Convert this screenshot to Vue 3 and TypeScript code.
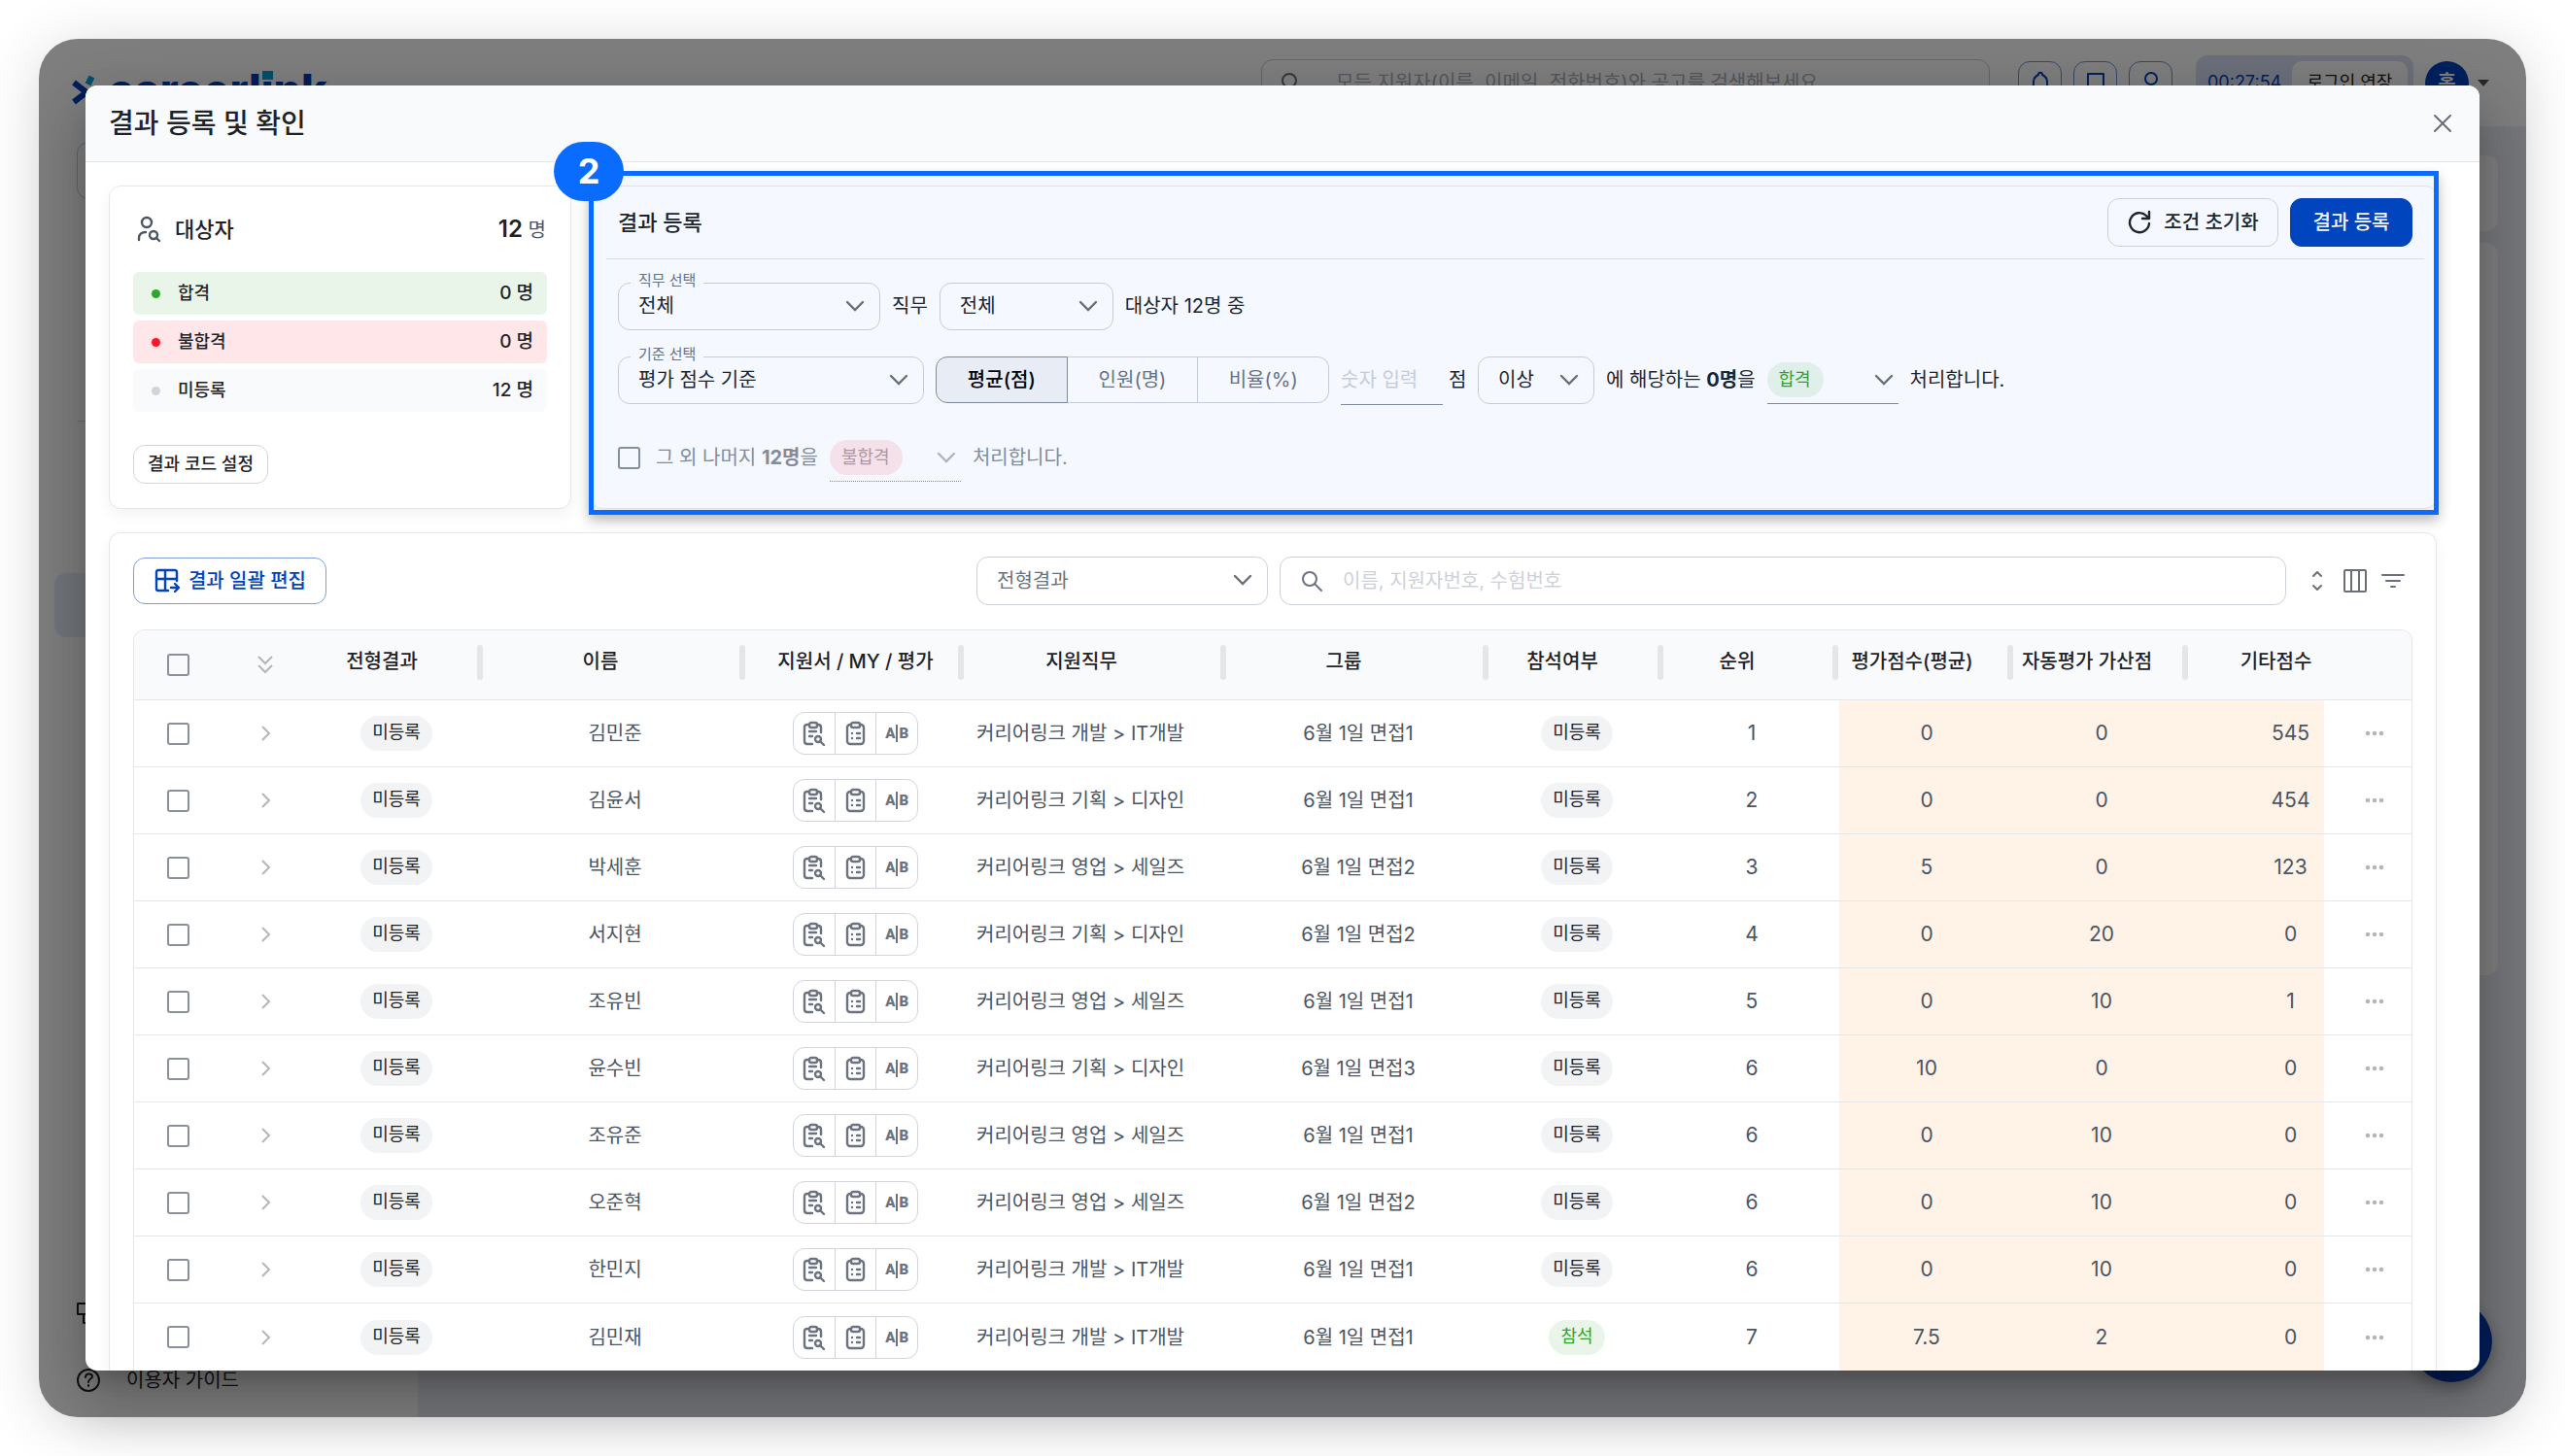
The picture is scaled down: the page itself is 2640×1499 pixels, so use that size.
<script setup lang="ts">
import { ref } from 'vue'

interface Applicant {
  name: string
  job: string
  group: string
  attended: boolean
  rank: number
  score: string
  bonus: number
  etc: number
}

interface Column {
  label: string
  kind: string
  bar: boolean
}

const applicants: Applicant[] = [
  { name: '김민준', job: '커리어링크 개발 > IT개발', group: '6월 1일 면접1', attended: false, rank: 1, score: '0', bonus: 0, etc: 545 },
  { name: '김윤서', job: '커리어링크 기획 > 디자인', group: '6월 1일 면접1', attended: false, rank: 2, score: '0', bonus: 0, etc: 454 },
  { name: '박세훈', job: '커리어링크 영업 > 세일즈', group: '6월 1일 면접2', attended: false, rank: 3, score: '5', bonus: 0, etc: 123 },
  { name: '서지현', job: '커리어링크 기획 > 디자인', group: '6월 1일 면접2', attended: false, rank: 4, score: '0', bonus: 20, etc: 0 },
  { name: '조유빈', job: '커리어링크 영업 > 세일즈', group: '6월 1일 면접1', attended: false, rank: 5, score: '0', bonus: 10, etc: 1 },
  { name: '윤수빈', job: '커리어링크 기획 > 디자인', group: '6월 1일 면접3', attended: false, rank: 6, score: '10', bonus: 0, etc: 0 },
  { name: '조유준', job: '커리어링크 영업 > 세일즈', group: '6월 1일 면접1', attended: false, rank: 6, score: '0', bonus: 10, etc: 0 },
  { name: '오준혁', job: '커리어링크 영업 > 세일즈', group: '6월 1일 면접2', attended: false, rank: 6, score: '0', bonus: 10, etc: 0 },
  { name: '한민지', job: '커리어링크 개발 > IT개발', group: '6월 1일 면접1', attended: false, rank: 6, score: '0', bonus: 10, etc: 0 },
  { name: '김민재', job: '커리어링크 개발 > IT개발', group: '6월 1일 면접1', attended: true, rank: 7, score: '7.5', bonus: 2, etc: 0 },
]

const columns: Column[] = [
  { label: '전형결과', kind: 'shifted', bar: true },
  { label: '이름', kind: 'shifted', bar: true },
  { label: '지원서 / MY / 평가', kind: '', bar: true },
  { label: '지원직무', kind: 'shifted', bar: true },
  { label: '그룹', kind: 'shifted', bar: true },
  { label: '참석여부', kind: 'shifted', bar: true },
  { label: '순위', kind: 'shifted', bar: true },
  { label: '평가점수(평균)', kind: 'shifted', bar: true },
  { label: '자동평가 가산점', kind: 'shifted', bar: true },
  { label: '기타점수', kind: 'wide', bar: false },
]

const summary = [
  { label: '합격', count: 0, tone: 'pass' },
  { label: '불합격', count: 0, tone: 'fail' },
  { label: '미등록', count: 12, tone: 'none' },
]

const units = ['평균(점)', '인원(명)', '비율(%)']
const unit = ref(units[0])
const restChecked = ref(false)
</script>

<template>
  <div class="page">
    <div class="frame">
      <div class="app">
        <header class="topbar">
          <div class="brand">
            <svg width="30" height="40" viewBox="0 0 30 40" aria-hidden="true">
              <path d="M3 12l13 10L3 32" fill="none" stroke="#003fbb" stroke-width="6" />
              <path d="M19 6l4 2-3 6-4-2z" fill="#00a3dc" stroke="#00a3dc" stroke-width="2" />
            </svg>
            <span class="wordmark">careerl<span class="dotted">i</span>nk</span>
          </div>
          <div class="topbar-right">
            <label class="global-search">
              <svg width="24" height="24" viewBox="0 0 24 24" class="line"><circle cx="10" cy="10" r="7" /><path d="M15 15l6 6" /></svg>
              <input type="text" aria-label="통합 검색" placeholder="모든 지원자(이름, 이메일, 전화번호)와 공고를 검색해보세요" />
            </label>
            <div class="top-icons">
              <button type="button" aria-label="알림"><svg width="24" height="24" viewBox="0 0 24 24" class="line"><path d="M4 18c1-1 1-4 1-7 0-4 3-6 5-7 0-3 4-3 4 0 2 1 5 3 5 7 0 3 0 6 1 7z" /></svg></button>
              <button type="button" aria-label="북마크"><svg width="24" height="24" viewBox="0 0 24 24" class="line"><path d="M4 22V3h16v19l-8-5z" /></svg></button>
              <button type="button" aria-label="사용자"><svg width="24" height="24" viewBox="0 0 24 24" class="line"><circle cx="12" cy="8" r="6" /><path d="M3 22c0-5 3-6 6-6M17 17l3 3" /></svg></button>
            </div>
            <div class="timer"><span>00:27:54</span><button type="button">로그인 연장</button></div>
            <div class="account"><span class="avatar">홍</span><span class="caret"></span></div>
          </div>
        </header>
        <div class="app-main">
          <nav class="sidebar">
            <div class="side-box"></div>
            <div class="side-line"></div>
            <div class="side-active"></div>
            <div class="side-foot">
              <svg width="28" height="28" viewBox="0 0 28 28" class="line"><path d="M2 3h19v11H2zM8 14v9h16v-9" /></svg>
              <a href="#guide">
                <svg width="28" height="28" viewBox="0 0 28 28" class="line"><circle cx="13" cy="14" r="11" /><path d="M10 11c0-5 7-4 7-1 0 3-4 2-4 6M13 19v1" /></svg>
                이용자 가이드
              </a>
            </div>
          </nav>
          <div class="content"><div class="ghost small"></div><div class="ghost large"></div></div>
        </div>
        <div class="fab"></div>
      </div>
      <div class="scrim"></div>

      <section class="modal" role="dialog" aria-label="결과 등록 및 확인">
        <header class="modal-head">
          <h1>결과 등록 및 확인</h1>
          <button type="button" class="icon-btn" aria-label="닫기">
            <svg width="22" height="22" viewBox="0 0 22 22" class="line"><path d="M3 3l16 16M19 3L3 19" /></svg>
          </button>
        </header>

        <div class="modal-body">
          <div class="top-row">
            <section class="card targets">
              <div class="targets-head">
                <svg width="28" height="28" viewBox="0 0 28 28" class="line bold">
                  <circle cx="11" cy="7" r="5" />
                  <path d="M3 25v-2c0-4 3-6 7-6" />
                  <circle cx="18" cy="20" r="4" /><path d="M21 23l3 3" />
                </svg>
                <h2>대상자</h2>
                <p class="total"><b>12</b> 명</p>
              </div>
              <ul>
                <li v-for="s in summary" :key="s.label" :class="s.tone">
                  <i class="dot"></i><span>{{ s.label }}</span><span class="count">{{ s.count }} 명</span>
                </li>
              </ul>
              <button type="button" class="btn small">결과 코드 설정</button>
            </section>

            <section class="register-wrap">
              <div class="card register">
                <div class="register-head">
                  <h2>결과 등록</h2>
                  <button type="button" class="btn reset">
                    <svg width="26" height="26" viewBox="0 0 26 26" class="line bold"><path d="M23 14a10 10 0 1 1-3-8l2 2M23 2v7h-7" /></svg>
                    조건 초기화
                  </button>
                  <button type="button" class="btn primary">결과 등록</button>
                </div>

                <div class="rules">
                  <div class="rule">
                    <div class="field job">
                      <label for="job">직무 선택</label>
                      <select id="job"><option>전체</option></select>
                      <svg class="chev" width="22" height="14" viewBox="0 0 22 14"><path d="M3 3l8 8 8-8" /></svg>
                    </div>
                    <span>직무</span>
                    <div class="field who">
                      <select aria-label="대상자 범위"><option>전체</option></select>
                      <svg class="chev" width="22" height="14" viewBox="0 0 22 14"><path d="M3 3l8 8 8-8" /></svg>
                    </div>
                    <span>대상자 12명 중</span>
                  </div>

                  <div class="rule">
                    <div class="field basis">
                      <label for="basis">기준 선택</label>
                      <select id="basis"><option>평가 점수 기준</option></select>
                      <svg class="chev" width="22" height="14" viewBox="0 0 22 14"><path d="M3 3l8 8 8-8" /></svg>
                    </div>
                    <div class="toggle">
                      <button v-for="u in units" :key="u" type="button" :class="{ on: unit === u }" @click="unit = u">{{ u }}</button>
                    </div>
                    <div class="amount">
                      <input id="amount" type="text" placeholder="숫자 입력" />
                      <label for="amount">점</label>
                    </div>
                    <div class="field cmp">
                      <select aria-label="비교 조건"><option>이상</option></select>
                      <svg class="chev" width="22" height="14" viewBox="0 0 22 14"><path d="M3 3l8 8 8-8" /></svg>
                    </div>
                    <span>에 해당하는 <b>0명</b>을</span>
                    <div class="result pass">
                      <i class="pill-bg"></i>
                      <select aria-label="처리 결과"><option>합격</option></select>
                      <svg class="chev" width="22" height="14" viewBox="0 0 22 14"><path d="M3 3l8 8 8-8" /></svg>
                    </div>
                    <span>처리합니다.</span>
                  </div>

                  <div class="rule rest">
                    <label class="rest-label"><input v-model="restChecked" type="checkbox" /><span>그 외 나머지 <b>12명</b>을</span></label>
                    <div class="result fail">
                      <i class="pill-bg"></i>
                      <select aria-label="나머지 처리 결과" disabled><option>불합격</option></select>
                      <svg class="chev" width="22" height="14" viewBox="0 0 22 14"><path d="M3 3l8 8 8-8" /></svg>
                    </div>
                    <span>처리합니다.</span>
                  </div>
                </div>
              </div>
              <div class="callout"><span class="step">2</span></div>
            </section>
          </div>

          <section class="card list">
            <div class="toolbar">
              <button type="button" class="btn outline">
                <svg width="28" height="28" viewBox="0 0 28 28" class="line bold"><path d="M24 14V5q0-2-2-2H5Q3 3 3 5v17q0 2 2 2h10M3 12h21M12 3v21M18 21h7M22 17l4 4-4 4" /></svg>
                결과 일괄 편집
              </button>
              <div class="tools">
                <div class="field state">
                  <select aria-label="전형결과"><option>전형결과</option></select>
                  <svg class="chev" width="22" height="14" viewBox="0 0 22 14"><path d="M3 3l8 8 8-8" /></svg>
                </div>
                <label class="search">
                  <svg width="24" height="24" viewBox="0 0 24 24" class="line"><circle cx="10" cy="10" r="7" /><path d="M15 15l7 7" /></svg>
                  <input type="text" aria-label="지원자 검색" placeholder="이름, 지원자번호, 수험번호" />
                </label>
                <div class="tool-icons">
                  <button type="button" aria-label="행 높이"><svg width="24" height="24" viewBox="0 0 24 24" class="line"><path d="M8 7l4-4 4 4M8 17l4 4 4-4" /></svg></button>
                  <button type="button" aria-label="열 설정"><svg width="24" height="24" viewBox="0 0 24 24" class="line"><rect x="1" y="1" width="22" height="22" rx="1" /><path d="M8 1v22M16 1v22" /></svg></button>
                  <button type="button" aria-label="필터"><svg width="24" height="24" viewBox="0 0 24 24" class="line"><path d="M1 6h22M5 12h14M10 18h4" /></svg></button>
                </div>
              </div>
            </div>

            <div class="table-wrap">
              <table>
                <colgroup>
                  <col class="w90" /><col class="w90" /><col class="w180" /><col class="w270" /><col class="w225" />
                  <col class="w270" /><col class="w270" /><col class="w180" /><col class="w180" /><col class="w180" />
                  <col class="w180" /><col /><col class="w90" />
                </colgroup>
                <thead>
                  <tr>
                    <th><input type="checkbox" aria-label="전체 선택" /></th>
                    <th><svg width="22" height="24" viewBox="0 0 22 24" class="mark"><path d="M4 3l7 7 7-7M4 12l7 7 7-7" /></svg></th>
                    <th v-for="c in columns" :key="c.label" :class="c.kind">
                      <span>{{ c.label }}</span><i v-if="c.bar" class="bar"></i>
                    </th>
                    <th></th>
                  </tr>
                </thead>
                <tbody>
                  <tr v-for="a in applicants" :key="a.name">
                    <td><input type="checkbox" :aria-label="a.name" /></td>
                    <td><svg width="22" height="24" viewBox="0 0 22 24" class="mark"><path d="M8 5l7 7-7 7" /></svg></td>
                    <td><span class="chip">미등록</span></td>
                    <td>{{ a.name }}</td>
                    <td>
                      <div class="docs">
                        <button type="button" aria-label="지원서">
                          <svg width="24" height="28" viewBox="0 0 24 28" class="line bold">
                            <path d="M7 5H5Q2 5 2 8v14q0 3 3 3h5M15 5h1q3 0 3 3v5M7 12h7M7 17h3" />
                            <rect x="7" y="3" width="8" height="5" rx="2" /><circle cx="16" cy="20" r="3" /><path d="M18 22l4 4" />
                          </svg>
                        </button>
                        <button type="button" aria-label="MY">
                          <svg width="24" height="28" viewBox="0 0 24 28" class="line bold">
                            <rect x="3" y="5" width="17" height="20" rx="3" /><rect x="7" y="3" width="9" height="5" rx="2" class="solid" />
                            <path d="M8 14h0M8 19h0M13 14h3M13 19h3" />
                          </svg>
                        </button>
                        <button type="button" class="ab" aria-label="평가"><span>A</span><i></i><span>B</span></button>
                      </div>
                    </td>
                    <td class="left">{{ a.job }}</td>
                    <td>{{ a.group }}</td>
                    <td><span class="chip" :class="{ green: a.attended }">{{ a.attended ? '참석' : '미등록' }}</span></td>
                    <td class="num">{{ a.rank }}</td>
                    <td class="num warm">{{ a.score }}</td>
                    <td class="num warm">{{ a.bonus }}</td>
                    <td class="num warm wide">{{ a.etc }}</td>
                    <td class="actions">
                      <button type="button" class="more" aria-label="더보기">
                        <svg width="22" height="8" viewBox="0 0 22 8"><circle cx="4" cy="4" r="2.3" /><circle cx="11" cy="4" r="2.3" /><circle cx="18" cy="4" r="2.3" /></svg>
                      </button>
                    </td>
                  </tr>
                </tbody>
              </table>
            </div>
          </section>
        </div>
      </section>
    </div>
  </div>
</template>

<style>
body {
  margin: 0;
  background: #fff;
}
</style>

<style scoped>
* {
  box-sizing: border-box;
}
.page {
  height: 100vh;
  padding: 40px;
  overflow: hidden;
  font: 400 20px/28px Inter, 'Noto Sans CJK KR', sans-serif;
  color: #1f2328;
}
button,
input,
select {
  font: inherit;
  color: inherit;
  margin: 0;
}
button {
  padding: 0;
  border: 0;
  background: none;
  white-space: nowrap;
}
h1,
h2,
p,
ul {
  margin: 0;
  padding: 0;
  font-weight: 500;
}
svg {
  display: block;
  flex: none;
}
.line {
  fill: none;
  stroke: currentColor;
  stroke-width: 2;
  stroke-linecap: round;
  stroke-linejoin: round;
}
.bold {
  stroke-width: 2.4;
}
.frame {
  position: relative;
  height: 100%;
  border-radius: 40px;
  box-shadow: 0 6px 60px rgba(0, 0, 0, 0.14);
}
.app {
  display: flex;
  flex-direction: column;
  height: 100%;
  border-radius: 40px;
  overflow: hidden;
  background: #fff;
}
.scrim {
  position: absolute;
  inset: 0;
  border-radius: 40px;
  background: rgba(0, 0, 0, 0.5);
}

/* application behind the dialog */
.topbar {
  display: flex;
  align-items: center;
  justify-content: space-between;
  height: 90px;
  flex: none;
  padding: 0 38px 0 33px;
}
.brand {
  display: flex;
  align-items: center;
  gap: 8px;
  height: 90px;
  padding-top: 16px;
}
.wordmark {
  font-size: 45px;
  line-height: 52px;
  font-weight: 800;
  color: #003fbb;
}
.dotted {
  position: relative;
}
.dotted::after {
  content: '';
  position: absolute;
  left: 1px;
  top: 8px;
  width: 11px;
  height: 9px;
  background: #00a3dc;
}
.topbar-right {
  display: flex;
  align-items: center;
}
.global-search {
  display: flex;
  align-items: center;
  gap: 32px;
  width: 750px;
  height: 48px;
  padding: 0 18px;
  margin-right: 29px;
  border: 1px solid #c6cad3;
  border-radius: 12px;
  color: #6b7078;
}
.global-search input {
  flex: 1;
  border: 0;
  background: none;
}
.global-search input::placeholder {
  color: #aab0bc;
  opacity: 1;
}
.top-icons {
  display: flex;
  gap: 12px;
  color: #0043bc;
}
.top-icons button {
  display: grid;
  place-items: center;
  width: 45px;
  height: 45px;
  border: 1px solid #6d91da;
  border-radius: 12px;
}
.timer {
  display: flex;
  align-items: center;
  justify-content: space-between;
  width: 224px;
  height: 56px;
  margin: 0 12px 0 24px;
  padding: 0 6px 0 12px;
  border-radius: 12px;
  background: #d8e0f6;
  color: #0043bc;
  font-size: 18px;
}
.timer button {
  width: 119px;
  height: 44px;
  border-radius: 10px;
  background: #fff;
  color: #1f2328;
}
.account {
  display: flex;
  align-items: center;
  gap: 9px;
}
.avatar {
  display: grid;
  place-items: center;
  width: 45px;
  height: 45px;
  border-radius: 50%;
  background: #0043bc;
  color: #fff;
  font-weight: 700;
}
.caret {
  border: 6px solid transparent;
  border-top: 7px solid #555;
  border-bottom: 0;
}
.app-main {
  display: flex;
  flex: 1;
}
.sidebar {
  display: flex;
  flex-direction: column;
  width: 390px;
  padding: 16px 16px 24px;
}
.side-box {
  height: 59px;
  margin-left: 23px;
  border: 1px solid #c6cad3;
  border-radius: 12px;
}
.side-line {
  height: 1px;
  margin: 228px 0 156px 23px;
  background: #dde0e6;
}
.side-active {
  height: 66px;
  border-radius: 12px;
  background: #e6ecf8;
}
.side-foot {
  display: flex;
  flex-direction: column;
  gap: 40px;
  margin-top: auto;
  padding-left: 22px;
}
.side-foot a {
  display: flex;
  gap: 24px;
  color: inherit;
  text-decoration: none;
}
.content {
  flex: 1;
  padding: 30px 29px 0;
  background: #eceef6;
}
.ghost {
  height: 78px;
  margin-bottom: 12px;
  border-radius: 12px;
  background: #fff;
}
.ghost.large {
  height: 754px;
}
.fab {
  position: absolute;
  right: 35px;
  bottom: 36px;
  width: 84px;
  height: 84px;
  border-radius: 50%;
  background: #003bb0;
  box-shadow: 0 5px 15px rgba(0, 0, 0, 0.3);
}

/* dialog */
.modal {
  position: absolute;
  inset: 48px;
  display: flex;
  flex-direction: column;
  overflow: hidden;
  border-radius: 12px;
  background: #fff;
  box-shadow: 0 16px 22px -10px rgba(0, 0, 0, 0.2), 0 36px 57px 4px rgba(0, 0, 0, 0.14), 0 14px 69px 12px rgba(0, 0, 0, 0.12);
}
.modal-head {
  display: flex;
  align-items: center;
  justify-content: space-between;
  flex: none;
  height: 79px;
  padding: 0 20px 0 24px;
  border-bottom: 1px solid #e4e6ea;
  background: #f9fafc;
}
.modal-head h1 {
  font-size: 28px;
  line-height: 36px;
}
.icon-btn {
  display: grid;
  place-items: center;
  width: 36px;
  height: 36px;
  color: #666d7b;
}
.modal-body {
  display: flex;
  flex-direction: column;
  flex: 1;
  gap: 24px;
  min-height: 0;
  padding: 24px 44px 0 24px;
}
.card {
  border: 1px solid #e5e7ea;
  border-radius: 12px;
  background: #fff;
  box-shadow: 0 6px 16px rgba(0, 0, 0, 0.05);
}
.top-row {
  display: flex;
  gap: 20px;
}
.targets {
  width: 476px;
  flex: none;
  height: 333px;
  padding: 24px;
}
.targets-head {
  display: flex;
  align-items: center;
  height: 40px;
  margin-bottom: 24px;
  padding: 0 1px 0 3px;
  color: #4b5563;
}
.targets-head h2 {
  margin-left: 12px;
  font-size: 22px;
  color: #1f2328;
}
.total {
  margin-left: auto;
  font-size: 20px;
  font-weight: 400;
}
.total b {
  font-size: 24px;
  font-weight: 600;
  color: #1f2328;
}
.targets ul {
  display: flex;
  flex-direction: column;
  gap: 6px;
  margin-bottom: 34px;
  list-style: none;
}
.targets li {
  display: flex;
  align-items: center;
  height: 44px;
  padding: 0 14px 0 19px;
  border-radius: 6px;
  font-size: 18px;
}
.targets li .dot {
  width: 9px;
  height: 9px;
  margin-right: 18px;
  border-radius: 50%;
}
.targets .count {
  margin-left: auto;
  font-size: 19px;
}
.pass {
  background: #eaf5e9;
}
.pass .dot {
  background: #2fa52f;
}
.fail {
  background: #ffe6e8;
}
.fail .dot {
  background: #ff1424;
}
.none {
  background: #f9fafc;
}
.none .dot {
  background: #d1d5db;
}
.btn {
  display: flex;
  align-items: center;
  justify-content: center;
  height: 50px;
  border: 1px solid #d1d5db;
  border-radius: 12px;
  font-weight: 500;
}
.btn.small {
  height: 40px;
  padding: 0 14px;
  font-size: 18px;
}
.register-wrap {
  position: relative;
  flex: 1;
}
.register {
  height: 333px;
}
.register-head {
  display: flex;
  align-items: center;
  gap: 12px;
  height: 75px;
  margin: 0 12px 0 15px;
  padding: 0 12px;
  border-bottom: 1px solid #dfe3ea;
}
.register-head h2 {
  margin-right: auto;
  font-size: 22px;
}
.btn.reset {
  gap: 12px;
  width: 176px;
}
.btn.primary {
  width: 126px;
  border-color: #0043bc;
  background: #0043bc;
  color: #fff;
}
.rules {
  display: flex;
  flex-direction: column;
  gap: 28px;
  padding: 24px 27px 0;
}
.rule {
  display: flex;
  align-items: center;
  gap: 12px;
  height: 48px;
  white-space: nowrap;
}
.rule b {
  font-weight: 700;
}
.field {
  position: relative;
}
.field select {
  width: 100%;
  height: 49px;
  padding: 0 44px 0 20px;
  border: 1px solid #cdd1d9;
  border-radius: 12px;
  background: transparent;
  appearance: none;
}
.field label {
  position: absolute;
  left: 13px;
  top: -13px;
  padding: 0 8px;
  background: #fff;
  color: #6b7280;
  font-size: 15px;
  line-height: 22px;
}
.chev {
  position: absolute;
  right: 15px;
  top: 17px;
  fill: none;
  stroke: #6b7078;
  stroke-width: 2.4;
  stroke-linecap: round;
  pointer-events: none;
}
.job {
  width: 270px;
}
.who {
  width: 179px;
}
.basis {
  width: 315px;
}
.cmp {
  width: 120px;
}
.toggle {
  display: flex;
  width: 405px;
  height: 48px;
}
.toggle button {
  flex: 1;
  border: 1px solid #cdd1d9;
  border-left: 0;
  color: #6b7280;
}
.toggle button:first-child {
  border-left: 1px solid #cdd1d9;
  border-radius: 12px 0 0 12px;
}
.toggle button:last-child {
  border-radius: 0 12px 12px 0;
}
.toggle button.on {
  border-color: #858b98;
  background: #f1f2f5;
  color: #000;
  font-weight: 500;
}
.amount {
  display: flex;
  align-items: center;
  gap: 6px;
}
.amount input {
  width: 105px;
  height: 52px;
  padding: 0;
  border: 0;
  border-bottom: 1px solid #858b98;
  background: none;
}
.amount input::placeholder,
.search input::placeholder {
  color: #cdd1d9;
  opacity: 1;
}
.amount label {
  width: 18px;
}
.result {
  position: relative;
  width: 135px;
  height: 49px;
  border-bottom: 1px solid #858b98;
  background: none;
}
.result select {
  position: relative;
  width: 100%;
  height: 48px;
  padding: 0 0 0 12px;
  border: 0;
  background: none;
  font-size: 18px;
  appearance: none;
  opacity: 1;
}
.result .chev {
  right: 4px;
}
.pill-bg {
  position: absolute;
  left: 0;
  top: 6px;
  width: 58px;
  height: 36px;
  border-radius: 18px;
}
.result.pass {
  color: #2fa52f;
}
.pass .pill-bg {
  background: #eaf5e9;
}
.result.fail {
  border-bottom-style: dotted;
}
.fail .pill-bg {
  width: 75px;
  background: #ffe6ea;
}
.fail select {
  color: #b39aa3;
}
.fail .chev {
  stroke: #b5b9c2;
}
.rest {
  margin-top: 4px;
  color: #878e9c;
}
.rest-label {
  display: flex;
  align-items: center;
  gap: 16px;
}
input[type='checkbox'] {
  display: block;
  width: 23px;
  height: 23px;
  border: 2px solid #8a909d;
  border-radius: 3px;
  background: transparent;
  appearance: none;
}
.callout {
  position: absolute;
  inset: -15px -2px -6px;
  border: 5px solid #0a6cff;
  background: rgba(10, 108, 255, 0.04);
  box-shadow: 0 6px 12px rgba(0, 0, 0, 0.25);
  pointer-events: none;
}
.step {
  position: absolute;
  left: -41px;
  top: -35px;
  width: 72px;
  height: 61px;
  border-radius: 31px;
  background: #0a6cff;
  color: #fff;
  font-size: 36px;
  line-height: 61px;
  font-weight: 700;
  text-align: center;
}

/* applicant list */
.list {
  display: flex;
  flex-direction: column;
  flex: 1;
  gap: 25px;
  padding: 24px 24px 0;
  border-bottom: 0;
  border-radius: 12px 12px 0 0;
}
.toolbar {
  display: flex;
  align-items: center;
  justify-content: space-between;
}
.btn.outline {
  gap: 8px;
  width: 199px;
  height: 48px;
  border-color: #7d9fde;
  color: #0043bc;
}
.tools {
  display: flex;
  align-items: center;
  gap: 12px;
  width: 63%;
}
.state {
  width: 300px;
}
.state select {
  height: 50px;
  color: #6b7280;
}
.search {
  display: flex;
  align-items: center;
  flex: 1;
  gap: 20px;
  height: 50px;
  padding: 0 20px;
  border: 1px solid #cdd1d9;
  border-radius: 12px;
  color: #6b7280;
}
.search input {
  flex: 1;
  padding: 0;
  border: 0;
  background: none;
}
.tool-icons {
  display: flex;
  gap: 15px;
  padding: 0 8px;
  color: #6b7078;
}
.table-wrap {
  flex: 1;
  overflow: hidden;
  border: 1px solid #e4e6ea;
  border-bottom: 0;
  border-radius: 12px 12px 0 0;
}
table {
  width: 100%;
  table-layout: fixed;
  border-collapse: separate;
  border-spacing: 0;
}
.w90 {
  width: 90px;
}
.w180 {
  width: 180px;
}
.w225 {
  width: 225px;
}
.w270 {
  width: 270px;
}
th,
td {
  padding: 0;
  text-align: center;
  vertical-align: middle;
  white-space: nowrap;
  border-bottom: 1px solid #e4e6ea;
}
th {
  position: relative;
  height: 72px;
  background: #f9fafc;
  font-weight: 500;
}
th span {
  display: block;
  padding-bottom: 7px;
}
th.shifted {
  padding-right: 30px;
}
.bar {
  position: absolute;
  right: 1px;
  top: 15px;
  width: 6px;
  height: 36px;
  border-radius: 3px;
  background: #e4e6ea;
}
td {
  height: 69px;
  color: #4b5563;
}
tbody tr:last-child td {
  border-bottom: 0;
}
th.wide {
  padding-left: 40px;
}
td.wide {
  padding-left: 70px;
}
td.actions {
  padding-left: 14px;
}
td.left {
  padding-left: 12px;
  text-align: left;
}
td.num {
  font-size: 21px;
}
.warm {
  background: #fff3e7;
}
th input[type='checkbox'],
td input[type='checkbox'] {
  margin: 0 auto;
}
.mark {
  margin: 0 auto;
  fill: none;
  stroke: #b4b6ba;
  stroke-width: 2;
}
.chip {
  display: inline-block;
  height: 36px;
  padding: 0 12px;
  border-radius: 18px;
  background: #f2f3f5;
  color: #1f2328;
  font-size: 18px;
  line-height: 34px;
}
.chip.green {
  background: #eaf5e9;
  color: #2fa52f;
}
.docs {
  display: inline-flex;
  width: 129px;
  height: 44px;
  border: 1px solid #d1d5db;
  border-radius: 12px;
  vertical-align: middle;
  color: #6b7280;
}
.docs button {
  display: flex;
  align-items: center;
  justify-content: center;
  flex: 1;
}
.docs button + button {
  border-left: 1px solid #d1d5db;
}
.docs .solid {
  fill: #fff;
}
.docs .ab {
  gap: 1px;
  font: 900 15px/20px Roboto, sans-serif;
}
.ab i {
  width: 2px;
  height: 18px;
  background: #6b7280;
}
.more {
  display: block;
  margin: 0 auto;
}
.more svg {
  fill: #b4b6ba;
}
</style>
